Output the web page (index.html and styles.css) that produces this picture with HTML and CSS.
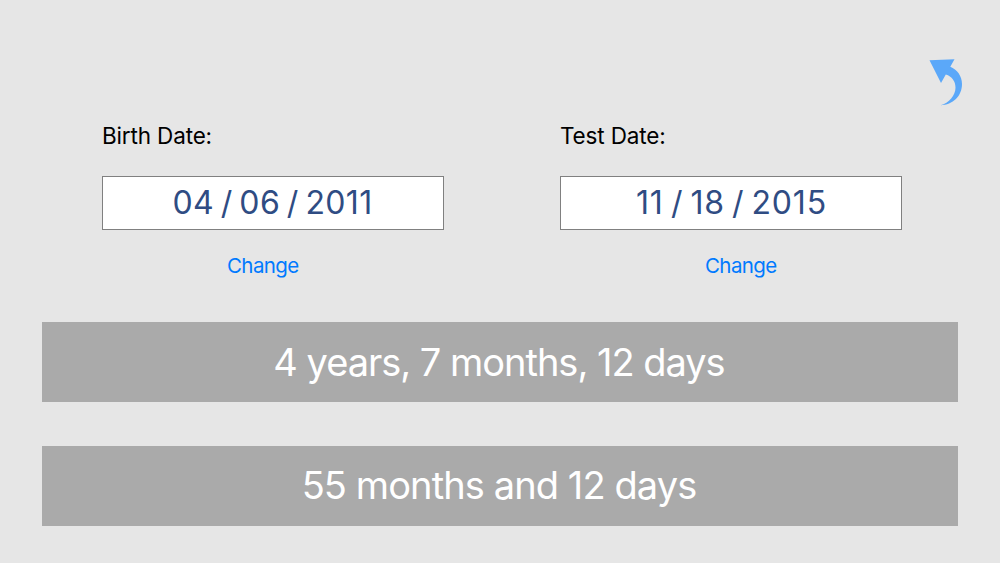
FILE: index.html
```html
<!DOCTYPE html>
<html lang="en">
<head>
    <meta charset="UTF-8">
    <meta name="viewport" content="width=device-width, initial-scale=1.0">
    <title>Age Calculator</title>
    <link rel="stylesheet" href="styles.css">
</head>
<body>
    <header>
        <button class="back" aria-label="Back">
            <svg width="34" height="48" viewBox="0 0 34 48">
                <path d="M0.5 1.2 L25.5 0.3 L21.3 7.8 C28 10.5 33 17 33 25 C33 37 24 46 11.5 46.2 C20 44 26.5 36.5 26.5 28.5 C26.5 22.5 23 17.5 16.8 15.6 L12 24 Z"/>
            </svg>
        </button>
    </header>

    <main>
        <div class="dates">
            <div class="date">
                <label>Birth Date:</label>
                <div class="date-box">04 / 06 / 2011</div>
                <button class="change change-birth">Change</button>
            </div>
            <div class="date">
                <label>Test Date:</label>
                <div class="date-box date-box-test">11 / 18 / 2015</div>
                <button class="change change-test">Change</button>
            </div>
        </div>

        <div class="result">4 years, 7 months, 12 days</div>
        <div class="result result-months">55 months and 12 days</div>
    </main>
</body>
</html>
```

FILE: styles.css
```css
* {
    box-sizing: border-box;
}
body {
    margin: 0;
    height: 563px;
    overflow: hidden;
    background-color: #e6e6e6;
    font-family: Inter, "Liberation Sans", sans-serif;
    color: #000000;
}
button {
    border: 0;
    padding: 0;
    background: none;
    font-family: inherit;
}
header {
    display: flex;
    justify-content: flex-end;
    height: 120px;
    padding: 59px 37px 0 0;
}
.back {
    width: 34px;
    height: 48px;
}
.back svg {
    display: block;
    fill: #5ba8f9;
}
main {
    padding: 0 42px;
}
.dates {
    display: flex;
    justify-content: space-between;
    height: 202px;
    padding: 0 56px 0 60px;
}
.date {
    width: 342px;
}
label {
    display: block;
    height: 56px;
    line-height: 32px;
    font-size: 22.5px;
    letter-spacing: -0.15px;
}
.date-box {
    height: 54px;
    padding-right: 1px;
    border: 1px solid #808080;
    background-color: #ffffff;
    color: #2f4c83;
    font-size: 32px;
    line-height: 52px;
    letter-spacing: 0.35px;
    word-spacing: -2.6px;
    text-align: center;
}
.date-box-test {
    padding-right: 0;
    padding-left: 1px;
    letter-spacing: 0.8px;
}
.change {
    display: block;
    height: 30px;
    margin-top: 21px;
    color: #007aff;
    font-size: 20.5px;
    line-height: 30px;
    letter-spacing: -0.6px;
}
.change-birth {
    margin-left: 125px;
}
.change-test {
    margin-left: 145px;
}
.result {
    height: 80px;
    margin-bottom: 44px;
    padding-right: 2px;
    background-color: #aaaaaa;
    color: #ffffff;
    font-size: 38px;
    line-height: 80px;
    letter-spacing: -1.02px;
    text-align: center;
}
.result-months {
    line-height: 78px;
    letter-spacing: -0.9px;
}
```
